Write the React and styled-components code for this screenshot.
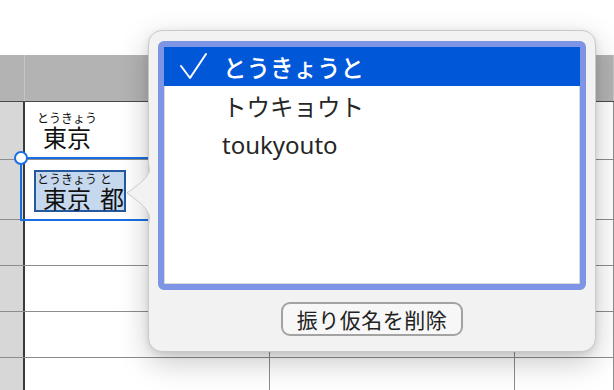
import React from "react";
import styled, { createGlobalStyle } from "styled-components";

const GlobalStyle = createGlobalStyle`
  html, body {
    margin: 0;
    padding: 0;
    background: #ffffff;
  }
  body {
    font-family: "Liberation Sans", "Noto Sans CJK JP", sans-serif;
    overflow: hidden;
  }
`;

const Page = styled.div`
  position: relative;
  width: 614px;
  height: 390px;
  overflow: hidden;
  background: #ffffff;
`;

const TopSpace = styled.div`
  height: 55px;
`;

const Sheet = styled.div`
  display: flex;
  flex-direction: column;
`;

const Row = styled.div`
  display: flex;
  height: ${({ h }) => h}px;
  box-sizing: border-box;
  border-bottom: 1px solid ${({ header }) => (header ? "#4a4a4a" : "#8c8c8c")};
  background: ${({ header }) => (header ? "#b3b3b3" : "#ffffff")};
`;

const RowHead = styled.div`
  width: 25px;
  flex: none;
  box-sizing: border-box;
  background: ${({ header }) => (header ? "#b3b3b3" : "#d7d7d7")};
  border-right: ${({ header }) => (header ? "1px solid #c6c6c6" : "2px solid #3a3a3a")};
`;

const Cell = styled.div`
  position: relative;
  box-sizing: border-box;
  width: ${({ w }) => (w ? `${w}px` : "auto")};
  flex: ${({ w }) => (w ? "none" : "1")};
  border-right: 1px solid ${({ header }) => (header ? "#c6c6c6" : "#8c8c8c")};
`;

const CellText = styled.div`
  display: flex;
  padding: ${({ top }) => top}px 0 0 ${({ left }) => left}px;
`;

const Marked = styled.div`
  display: flex;
  align-items: flex-end;
  gap: 3px;
  padding: 1px 0 0 1px;
  background: #c6d8ee;
  border: 2px solid #24599f;
`;

const Furi = styled.span`
  display: inline-flex;
  flex-direction: column;
  align-items: ${({ align }) => align || "center"};
  font-family: "Noto Sans CJK JP", sans-serif;
  color: #111;
`;

const Reading = styled.span`
  font-size: 12px;
  line-height: 12px;
  white-space: nowrap;
  margin-bottom: 1px;
  padding-left: ${({ indent }) => indent || 0}px;
`;

const Base = styled.span`
  font-size: 24px;
  line-height: 24px;
  white-space: nowrap;
`;

const Selection = styled.div`
  position: absolute;
  left: -5px;
  top: -3px;
  right: -2px;
  bottom: -2px;
  border: 2px solid #1a6ee4;
  pointer-events: none;
`;

const Handle = styled.div`
  position: absolute;
  left: -8px;
  top: -8px;
  width: 10px;
  height: 10px;
  border-radius: 50%;
  background: #ffffff;
  border: 2px solid #1a6ee4;
`;

const Popover = styled.div`
  position: absolute;
  left: 148px;
  top: 30px;
  width: 448px;
  height: 322px;
  box-sizing: border-box;
  display: flex;
  flex-direction: column;
  align-items: center;
  padding: 10px 10px 0 10px;
  background: #f2f2f2;
  border: 1px solid #c9c9c9;
  border-radius: 14px;
  box-shadow: 0 10px 30px rgba(0, 0, 0, 0.22), 0 2px 6px rgba(0, 0, 0, 0.1);
`;

const Arrow = styled.svg`
  position: absolute;
  left: -24px;
  top: 134px;
  overflow: visible;
`;

const ListBox = styled.div`
  width: 428px;
  height: 249px;
  box-sizing: border-box;
  border: 6px solid #7e94e5;
  border-radius: 6px;
  background: #ffffff;
  display: flex;
  flex-direction: column;
  box-shadow: inset 0 0 0 1px #d8d8d8;
`;

const Item = styled.div`
  display: flex;
  align-items: center;
  height: 39px;
  flex: none;
  padding-left: 59px;
  position: relative;
  font-family: "Noto Sans CJK JP", sans-serif;
  font-size: 23.5px;
  color: ${({ selected }) => (selected ? "#ffffff" : "#262626")};
  background: ${({ selected }) => (selected ? "#0058d8" : "transparent")};
  font-weight: ${({ selected }) => (selected ? 500 : 400)};
`;

const Latin = styled.span`
  font-family: "Noto Sans", "Liberation Sans", sans-serif;
  font-size: 24px;
  margin-left: -1px;
`;

const Check = styled.svg`
  position: absolute;
  left: 16px;
  top: 6px;
`;

const RemoveButton = styled.button`
  margin-top: 12px;
  width: 182px;
  height: 34px;
  box-sizing: border-box;
  border: 2px solid #a3a3a3;
  border-radius: 9px;
  background: #f7f7f7;
  font-family: "Noto Sans CJK JP", sans-serif;
  font-size: 21px;
  line-height: 28px;
  color: #222;
  padding: 0;
  letter-spacing: 0.5px;
`;

export default function App() {
  const cols = [245, 245, null];
  return (
    <Page>
      <GlobalStyle />
      <TopSpace />
      <Sheet>
        <Row h={47} header>
          <RowHead header />
          {cols.map((w, i) => (
            <Cell key={i} w={w} header />
          ))}
        </Row>
        <Row h={58}>
          <RowHead />
          <Cell w={245}>
            <CellText top={10} left={12}>
              <Furi>
                <Reading>とうきょう</Reading>
                <Base>東京</Base>
              </Furi>
            </CellText>
          </Cell>
          <Cell w={245} />
          <Cell />
        </Row>
        <Row h={60}>
          <RowHead />
          <Cell w={245}>
            <Selection>
              <Handle />
            </Selection>
            <CellText top={10} left={9}>
              <Marked>
                <Furi>
                  <Reading>とうきょう</Reading>
                  <Base>東京</Base>
                </Furi>
                <Furi align="flex-start">
                  <Reading>と</Reading>
                  <Base>都</Base>
                </Furi>
              </Marked>
            </CellText>
          </Cell>
          <Cell w={245} />
          <Cell />
        </Row>
        {[0, 1, 2, 3].map((r) => (
          <Row key={r} h={46}>
            <RowHead />
            {cols.map((w, i) => (
              <Cell key={i} w={w} />
            ))}
          </Row>
        ))}
      </Sheet>

      <Popover>
        <Arrow width="26" height="58" viewBox="0 0 26 58">
          <path
            d="M25 0 C25 12 18 16 2 28 C18 40 25 44 25 58"
            fill="#f2f2f2"
            stroke="#c9c9c9"
            strokeWidth="1"
          />
          <rect x="25" y="-1" width="3" height="60" fill="#f2f2f2" />
        </Arrow>
        <ListBox>
          <Item selected>
            <Check width="28" height="28" viewBox="0 0 28 28">
              <path
                d="M1 13 L10 25 L26 1"
                fill="none"
                stroke="#ffffff"
                strokeWidth="2"
                strokeLinecap="round"
                strokeLinejoin="round"
              />
            </Check>
            とうきょうと
          </Item>
          <Item>トウキョウト</Item>
          <Item>
            <Latin>toukyouto</Latin>
          </Item>
        </ListBox>
        <RemoveButton>振り仮名を削除</RemoveButton>
      </Popover>
    </Page>
  );
}
